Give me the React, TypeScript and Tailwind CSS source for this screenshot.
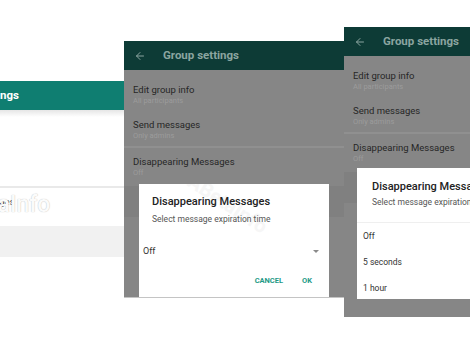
import React from "react";
import { ArrowLeft } from "lucide-react";

interface ScreenProps {
  dim?: boolean;
  className: string;
  children?: React.ReactNode;
}

const Screen: React.FC<ScreenProps> = ({ dim, className, children }) => {
  const title = dim ? "text-[#262626]" : "text-[#2b2b2b]";
  const sub = dim ? "text-[#9c9c9c]" : "text-[#8f8f8f]";
  const line = dim ? "bg-[#909090]" : "bg-[#e9e9e9]";

  return (
    <div
      className={`absolute w-[220px] overflow-hidden ${dim ? "bg-[#868686]" : "bg-white"} ${className}`}
    >
      {/* Toolbar */}
      <div
        className={`relative h-[29px] flex items-center ${
          dim ? "bg-[#0d3b36] text-[#8ba5a0]" : "bg-[#0f7e71] text-white"
        }`}
      >
        <ArrowLeft size={12} strokeWidth={2} className="ml-[10px] shrink-0" />
        <span className="ml-[17px] text-[11.5px] font-bold whitespace-nowrap">Group settings</span>
        {!dim && (
          <div className="absolute left-0 right-0 top-[29px] h-[7px] bg-linear-to-b from-[#e6e6e6] to-white" />
        )}
      </div>

      {/* Settings list */}
      <div className="flex flex-col">
        <div className="px-[9px] pt-[14px]">
          <div className={`text-[9.5px] leading-[12px] whitespace-nowrap ${title}`}>Edit group info</div>
          <div className={`text-[7.5px] leading-[10px] whitespace-nowrap ${sub}`}>All participants</div>
        </div>
        <div className="px-[9px] pt-[13px]">
          <div className={`text-[9.5px] leading-[12px] whitespace-nowrap ${title}`}>Send messages</div>
          <div className={`text-[7.5px] leading-[10px] whitespace-nowrap ${sub}`}>Only admins</div>
        </div>
        <div className={`mt-[5px] h-[2px] ${line}`} />
        <div className="px-[9px] pt-[8px]">
          <div className={`text-[9.5px] leading-[12px] whitespace-nowrap ${title}`}>Disappearing Messages</div>
          <div className={`text-[7.5px] leading-[10px] whitespace-nowrap ${sub}`}>Off</div>
        </div>
        <div className={`mt-[8px] h-[31px] ${dim ? "bg-[#808080]" : "bg-[#f1f1f1]"}`} />
      </div>

      {children}
    </div>
  );
};

const App: React.FC = () => {
  return (
    <div className="relative w-[470px] h-[352px] overflow-hidden bg-white font-[Roboto,sans-serif]">
      {/* Left screenshot, mostly off-screen */}
      <Screen className="left-[-96px] top-[81px] h-[176px]" />
      <span className="absolute left-[-72px] top-[192px] text-[23px] font-medium leading-[26px] text-[#fbfbfb] [text-shadow:0_0_1px_#b0b0b0] whitespace-nowrap">
        WABetaInfo
      </span>

      {/* Middle screenshot with dropdown dialog */}
      <Screen dim className="left-[124px] top-[41px] h-[257px] border-b border-[#c4c4c4]">
        <div className="absolute left-[15px] top-[143px] w-[190px] h-[130px] bg-white overflow-hidden">
          <span className="absolute left-[28px] top-[0px] rotate-[33deg] text-[20px] font-bold text-[#f6f6f6] whitespace-nowrap">
            WABetaInfo
          </span>
          <div className="relative flex flex-col">
            <div className="pl-[13px] pt-[11px] text-[11px] leading-[14px] font-medium text-[#222]">
              Disappearing Messages
            </div>
            <div className="pl-[13px] mt-[5px] text-[8.5px] leading-[11px] text-[#565656]">
              Select message expiration time
            </div>
            <div className="mt-[20px] pl-[4px] pr-[10px] flex items-center justify-between">
              <span className="text-[9px] leading-[12px] text-[#333]">Off</span>
              <span className="w-0 h-0 border-l-[3px] border-r-[3px] border-t-[3px] border-l-transparent border-r-transparent border-t-[#8a8a8a]" />
            </div>
            <div className="mt-[19px] pr-[17px] flex justify-end gap-[19px] text-[7.5px] leading-[10px] font-bold text-[#1e9a86]">
              <span>CANCEL</span>
              <span>OK</span>
            </div>
          </div>
        </div>
      </Screen>

      {/* Right screenshot with option list */}
      <Screen dim className="left-[344px] top-[27px] h-[290px]">
        <div className="absolute left-[13px] top-[141px] w-[200px] h-[131px] bg-white flex flex-col">
          <div className="pl-[15px] pt-[12px] text-[11px] leading-[14px] font-medium text-[#222] whitespace-nowrap">
            Disappearing Messages
          </div>
          <div className="pl-[15px] mt-[3px] text-[8.5px] leading-[11px] text-[#565656] whitespace-nowrap">
            Select message expiration time
          </div>
          <div className="mt-[14px] border-t border-[#efefef] flex flex-col text-[8.5px] text-[#333]">
            <div className="h-[26px] pl-[6px] flex items-center">Off</div>
            <div className="h-[26px] pl-[6px] flex items-center">5 seconds</div>
            <div className="h-[26px] pl-[6px] flex items-center">1 hour</div>
          </div>
        </div>
      </Screen>
    </div>
  );
};

export default App;
